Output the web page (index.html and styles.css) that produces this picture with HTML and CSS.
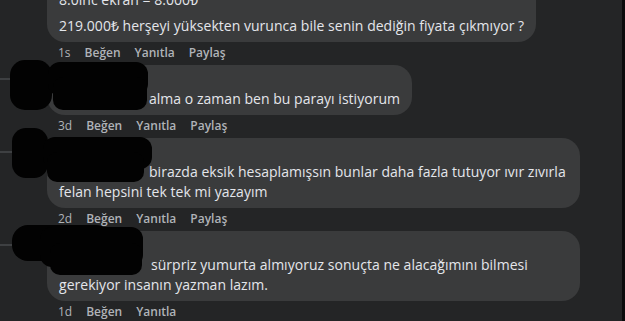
FILE: index.html
```html
<!DOCTYPE html>
<html lang="tr">
<head>
    <meta charset="UTF-8">
    <meta name="viewport" content="width=device-width, initial-scale=1.0">
    <title>Yorumlar</title>
    <link rel="stylesheet" href="styles.css">
</head>
<body>
    <div class="feed">
        <div class="thread">
            <!-- üstte kesilen yorum -->
            <div class="comment">
                <div class="bubble">
                    <p>8.0inc ekran = 8.000₺</p>
                    <p>219.000₺ herşeyi yüksekten vurunca bile senin dediğin fiyata çıkmıyor ?</p>
                </div>
                <div class="actions">
                    <span class="time">1s</span>
                    <span>Beğen</span>
                    <span>Yanıtla</span>
                    <span>Paylaş</span>
                </div>
            </div>

            <div class="comment reply">
                <span class="branch"></span>
                <div class="bubble">
                    <div class="author">Gizli Kullanıcı</div>
                    <p><span class="masked">Gizli Ad</span>alma o zaman ben bu parayı istiyorum</p>
                </div>
                <div class="actions">
                    <span class="time">3d</span>
                    <span>Beğen</span>
                    <span>Yanıtla</span>
                    <span>Paylaş</span>
                </div>
                <svg class="redact" width="160" height="64" viewBox="0 0 160 64">
                    <rect x="10" y="7" width="42" height="50" rx="15"/>
                    <rect x="48" y="9" width="100" height="34" rx="12"/>
                    <rect x="53" y="24" width="94" height="33" rx="10"/>
                </svg>
            </div>

            <div class="comment reply">
                <span class="branch"></span>
                <div class="bubble">
                    <div class="author">Gizli Kullanıcı</div>
                    <p><span class="masked">Gizli Ad.</span>birazda eksik hesaplamışsın bunlar daha fazla tutuyor ıvır zıvırla felan hepsini tek tek mi yazayım</p>
                </div>
                <div class="actions">
                    <span class="time">2d</span>
                    <span>Beğen</span>
                    <span>Yanıtla</span>
                    <span>Paylaş</span>
                </div>
                <svg class="redact" width="160" height="64" viewBox="0 0 160 64">
                    <rect x="12" y="2" width="36" height="50" rx="14"/>
                    <rect x="43" y="11" width="109" height="32" rx="12"/>
                    <rect x="47" y="26" width="97" height="30" rx="10"/>
                </svg>
            </div>

            <div class="comment reply">
                <span class="branch"></span>
                <div class="bubble">
                    <div class="author">Gizli Kullanıcı</div>
                    <p><span class="masked wide">Gizli Ad</span>sürpriz yumurta almıyoruz sonuçta ne alacağımını bilmesi gerekiyor insanın yazman lazım.</p>
                </div>
                <div class="actions">
                    <span class="time">1d</span>
                    <span>Beğen</span>
                    <span>Yanıtla</span>
                </div>
                <svg class="redact" width="160" height="64" viewBox="0 0 160 64">
                    <rect x="12" y="6" width="100" height="36" rx="16"/>
                    <rect x="40" y="8" width="103" height="40" rx="12"/>
                    <rect x="50" y="24" width="92" height="32" rx="10"/>
                </svg>
            </div>
        </div>
    </div>
    <div class="edge"></div>
</body>
</html>
```

FILE: styles.css
```css
body {
    margin: 0;
    height: 100vh;
    overflow: hidden;
    display: flex;
    background: #242526;
    font-family: 'Open Sans', 'Liberation Sans', sans-serif;
    color: #e4e6eb;
}

.feed {
    flex: 1;
    overflow: hidden;
}

.edge {
    width: 3px;
    background: #0b0b0c;
}

.thread {
    margin-top: -18px;
}

.comment {
    position: relative;
    padding-left: 47px;
}

.bubble {
    width: fit-content;
    max-width: 533px;
    box-sizing: border-box;
    padding: 8px 12px 6px;
    background: #3a3b3c;
    border-radius: 18px;
    font-size: 14px;
    line-height: 20px;
    letter-spacing: 0.03px;
}

.bubble p {
    margin: 0;
}

.bubble p + p {
    margin-top: 6px;
}

.author {
    font-size: 12px;
    font-weight: 700;
    line-height: 16px;
}

.masked {
    display: inline-block;
    width: 90px;
    color: transparent;
}

.masked.wide {
    width: 92px;
}

.actions {
    display: flex;
    gap: 14px;
    padding: 3px 0 4px 11px;
    font-size: 12px;
    line-height: 16px;
    font-weight: 600;
    color: #b0b3b8;
}

.actions .time {
    font-weight: 400;
}

.branch {
    position: absolute;
    left: 0;
    top: 13px;
    width: 14px;
    height: 2px;
    background: #3e4042;
}

.redact {
    position: absolute;
    left: 0;
    top: -12px;
    fill: #020202;
}
```
